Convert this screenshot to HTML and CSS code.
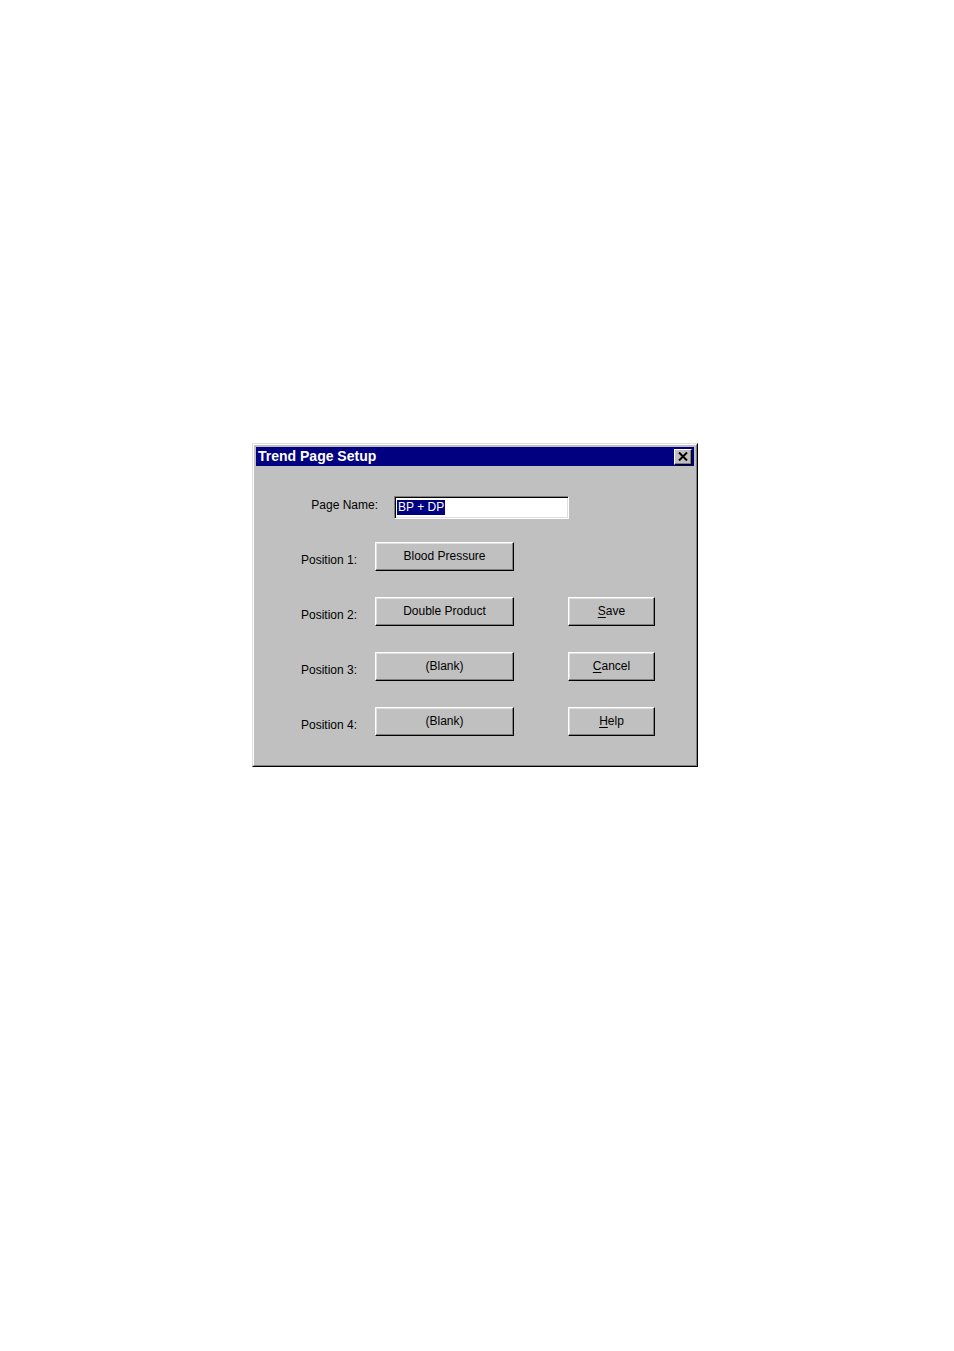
FILE: index.html
```html
<!DOCTYPE html>
<html>
<head>
<meta charset="utf-8">
<link rel="stylesheet" href="styles.css">
</head>
<body>
<div class="window">
  <div class="window-inner">
    <div class="titlebar">
      <span class="title">Trend Page Setup</span>
      <span class="close">
        <svg width="10" height="9" viewBox="0 0 10 9"><path d="M1 0.5 L9 8.5 M9 0.5 L1 8.5" stroke="#000" stroke-width="2" fill="none"/></svg>
      </span>
    </div>
    <div class="content">
      <div class="name-row">
        <span class="name-label">Page Name:</span>
        <div class="input"><span class="sel">BP + DP</span></div>
      </div>
      <div class="grid">
        <span class="label">Position 1:</span>
        <div class="btn wide">Blood Pressure</div>
        <span></span>

        <span class="label">Position 2:</span>
        <div class="btn wide">Double Product</div>
        <div class="btn side"><u>S</u>ave</div>

        <span class="label">Position 3:</span>
        <div class="btn wide">(Blank)</div>
        <div class="btn side"><u>C</u>ancel</div>

        <span class="label">Position 4:</span>
        <div class="btn wide">(Blank)</div>
        <div class="btn side"><u>H</u>elp</div>
      </div>
    </div>
  </div>
</div>
</body>
</html>
```

FILE: styles.css
```css
html, body {
  margin: 0;
  padding: 0;
  background: #ffffff;
}
body {
  font-family: "Liberation Sans", Arial, sans-serif;
  font-size: 12px;
  color: #000;
}
.window {
  margin-left: 252px;
  margin-top: 443px;
  width: 446px;
  height: 324px;
  box-sizing: border-box;
  border: 1px solid;
  border-color: #dfdfdf #000 #000 #dfdfdf;
}
.window-inner {
  height: 100%;
  box-sizing: border-box;
  border: 1px solid;
  border-color: #fff #808080 #808080 #fff;
  background: #c0c0c0;
  padding: 2px;
}
.titlebar {
  height: 19px;
  background: #000080;
  display: flex;
  align-items: center;
  justify-content: space-between;
  padding: 0 2px 0 2px;
}
.title {
  color: #fff;
  font-weight: bold;
  font-size: 14px;
  line-height: 19px;
}
.close {
  width: 18px;
  height: 16px;
  box-sizing: border-box;
  background: #c0c0c0;
  border: 1px solid;
  border-color: #fff #000 #000 #fff;
  box-shadow: inset -1px -1px #808080;
  display: flex;
  align-items: center;
  justify-content: center;
}
.content {
  padding-top: 30px;
}
.name-row {
  display: flex;
  align-items: center;
}
.name-label {
  width: 122px;
  text-align: right;
  margin-right: 16px;
  margin-top: -5px;
}
.input {
  width: 175px;
  height: 23px;
  box-sizing: border-box;
  background: #fff;
  border: 1px solid;
  border-color: #808080 #fff #fff #808080;
  box-shadow: inset 1px 1px #000, inset -1px -1px #dfdfdf;
  padding: 3px 0 0 2px;
}
.sel {
  background: #000080;
  color: #fff;
  font-size: 12px;
  line-height: 15px;
  display: inline-block;
  padding: 0 1px;
}
.grid {
  margin-top: 23px;
  display: grid;
  grid-template-columns: 101px 139px 123px;
  grid-auto-rows: 29px;
  column-gap: 18px;
  row-gap: 26px;
}
.label {
  text-align: right;
  align-self: center;
  padding-top: 6px;
}
.btn {
  box-sizing: border-box;
  border: 1px solid;
  border-color: #fff #000 #000 #fff;
  box-shadow: inset -1px -1px #808080, inset 1px 1px #dfdfdf;
  background: #c0c0c0;
  display: flex;
  align-items: center;
  justify-content: center;
  padding-bottom: 1px;
}
.side {
  justify-self: end;
  width: 87px;
}
.btn u {
  text-decoration: underline;
  text-underline-offset: 2px;
}
```
